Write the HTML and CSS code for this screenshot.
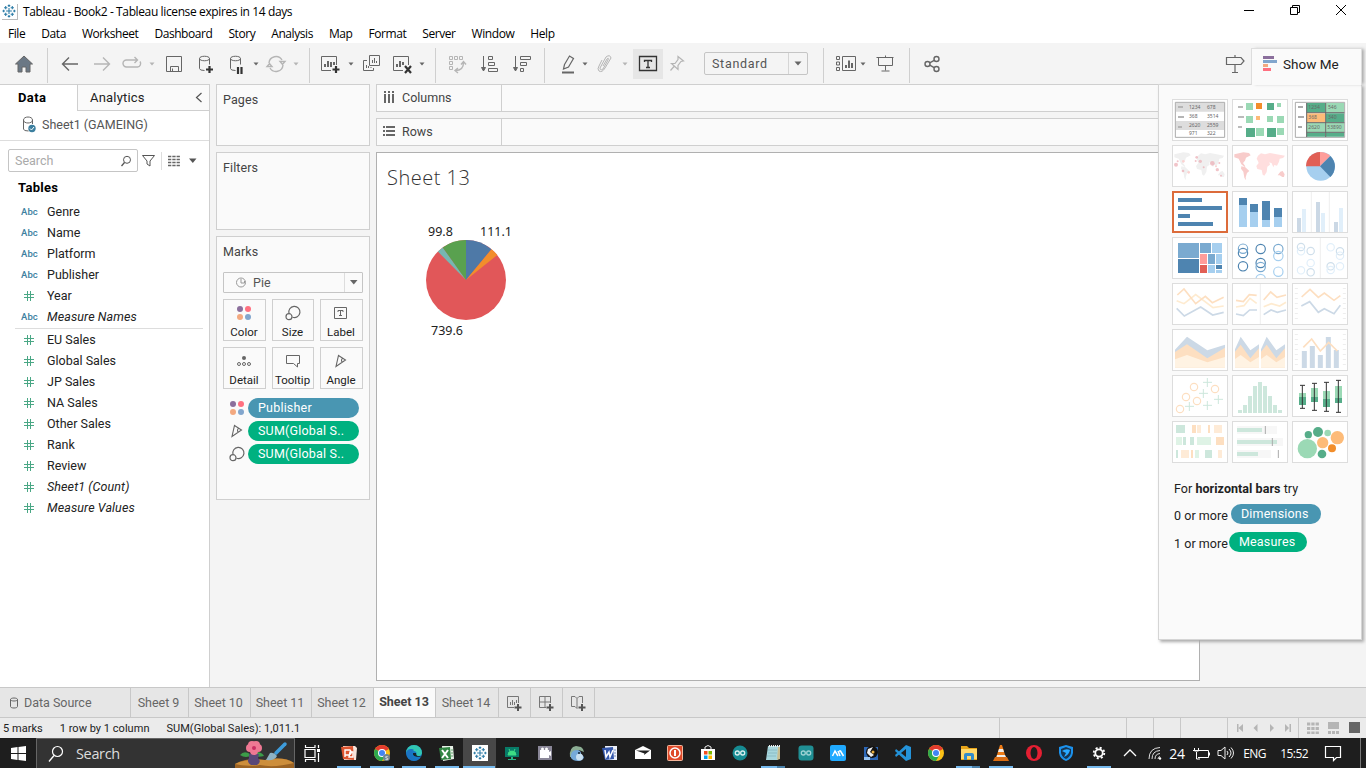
FILE: index.html
```html
<!DOCTYPE html>
<html lang="en">
<head>
<meta charset="utf-8">
<title>Tableau - Book2</title>
<link rel="stylesheet" href="styles.css">
</head>
<body>
<svg class="defs" width="0" height="0">
  <defs>
    <symbol id="caret" viewBox="0 0 8 24"><path d="M1.500 10.500h5L4 13.500z" fill="currentColor"/></symbol>
    <symbol id="hash" viewBox="0 0 12 12"><path d="M4.500 1v10M7.500 1v10M1 4.500h10M1 7.500h10" stroke="#4aa785" fill="none"/></symbol>
    <symbol id="dots" viewBox="0 0 16 16"><circle cx="4" cy="4" r="3" fill="#8b6f9c"/><circle cx="12" cy="4" r="3" fill="#ff7080"/><circle cx="4" cy="12" r="3" fill="#f3a980"/><circle cx="12" cy="12" r="3" fill="#82a6cd"/></symbol>
    <symbol id="size" viewBox="0 0 16 16"><g fill="none" stroke="#666" stroke-width="1.2"><path d="M4 8.500A5.600 5.600 0 1 1 7.500 12.200"/><circle cx="4" cy="11.700" r="3"/></g></symbol>
    <symbol id="angle" viewBox="0 0 16 16"><path d="M5.500 2.500L12.500 7 3 13.500zM9.500 5Q7.500 8 9.500 9.200" fill="none" stroke="#666" stroke-width="1.1"/></symbol>
    <symbol id="logo" viewBox="0 0 17 17"><path d="M8.500 5v7M5 8.500h7M8.500 .5v3M7 2h3M8.500 13.500v3M7 15h3M2 7v3M.5 8.500h3M15 7v3M13.500 8.500h3M4.500 2.500v4M2.500 4.500h4M12.500 2.500v4M10.500 4.500h4M4.500 10.500v4M2.500 12.500h4M12.500 10.500v4M10.500 12.500h4" fill="none" stroke="#2b7ba6" stroke-width="1.300"/></symbol>
    <symbol id="chrome" viewBox="0 0 16 16"><circle cx="8" cy="8" r="8" fill="#fbc116"/><path d="M8 8L1.100 4A8 8 0 0 1 14.900 4z" fill="#e33b2e"/><path d="M8 8L1.100 4A8 8 0 0 0 8 16l4-7z" fill="#2da94f"/><circle cx="8" cy="8" r="4" fill="#fff"/><circle cx="8" cy="8" r="3" fill="#4285f4"/></symbol>
  </defs>
</svg>
<div class="app">
  <header class="titlebar">
    <span class="app-icon"><svg width="14" height="14"><use href="#logo"/></svg></span>
    <span class="app-title">Tableau - Book2 - Tableau license expires in 14 days</span>
    <div class="window-buttons">
      <svg width="12" height="12"><path d="M1 6.500h10" stroke="#000"/></svg>
      <svg width="12" height="12"><path d="M1.500 3.500h7v7h-7zM3.500 3.500v-2h7v7h-2" fill="none" stroke="#000"/></svg>
      <svg width="12" height="12"><path d="M1 1l10 10M11 1L1 11" stroke="#000"/></svg>
    </div>
  </header>
  <nav class="menubar">
    <span>File</span><span>Data</span><span>Worksheet</span><span>Dashboard</span><span>Story</span><span>Analysis</span><span>Map</span><span>Format</span><span>Server</span><span>Window</span><span>Help</span>
  </nav>
  <div class="toolbar">
    <svg class="ic" viewBox="0 0 24 24"><path d="M12 4l8.500 8H18v8h-4v-5h-4v5H6v-8H3.500z" fill="#6b7885"/></svg>
    <i class="sep"></i>
    <svg class="ic thick" viewBox="0 0 24 24"><path d="M20 12H5M11 5.500L4.500 12l6.500 6.500"/></svg>
    <svg class="ic thick off" viewBox="0 0 24 24"><path d="M4 12h15M13 5.500l6.500 6.500-6.500 6.500"/></svg>
    <svg class="ic thick off" viewBox="0 0 24 24"><path d="M17 8H6.500a3.500 3.500 0 0 0 0 7h11a3.500 3.500 0 0 0 2.500-5.500M14.500 5l3 3-3 3"/></svg>
    <svg class="caret off"><use href="#caret"/></svg>
    <svg class="ic" viewBox="0 0 24 24"><path d="M4.500 4.500h15v15h-15zM8.500 19.500v-5h8v5M10.500 19.500v-3"/></svg>
    <svg class="ic" viewBox="0 0 24 24"><path d="M5.500 6.500v10q0 2 5 2M5.500 6.500c0-3 10-3 10 0s-10 3-10 0M15.500 6.500v6"/><path class="bold" d="M15.500 14v7M12 17.500h7"/></svg>
    <svg class="ic" viewBox="0 0 24 24"><path d="M6.500 6.500v10q0 2 5 2M6.500 6.500c0-3 10-3 10 0s-10 3-10 0M16.500 6.500v6"/><path class="bold" d="M14 15v7M17.500 15v7"/></svg>
    <svg class="caret"><use href="#caret"/></svg>
    <svg class="ic off thick" viewBox="0 0 24 24"><path d="M5 11a7 7 0 0 1 13-3M19 13a7 7 0 0 1-13 3M16 9.500h5L18.500 12.500zM3 14.500h5L5.500 11.500z"/></svg>
    <svg class="caret off"><use href="#caret"/></svg>
    <i class="sep"></i>
    <svg class="ic" viewBox="0 0 24 24"><path d="M13 18.500H3.500v-14h15V13"/><path class="mid" d="M7 15v-3M10 15v-6M13 15v-5M16 13v-3"/><path class="bold" d="M18 14v7M14.500 17.500h7"/></svg>
    <svg class="caret"><use href="#caret"/></svg>
    <svg class="ic" viewBox="0 0 24 24"><path d="M10.500 3.500h10v10h-10zM8 8.500H4.500v10h10V16M7.500 16v-3M9.500 16v-2M12 16v-1M13.500 11V8M15.500 11V6M17.500 11V9"/></svg>
    <svg class="ic" viewBox="0 0 24 24"><path d="M13 18.500H3.500v-14h15V13"/><path class="mid" d="M7 15v-3M10 15v-6M13 13v-3"/><path class="bold" d="M15 14l6 7M21 14l-6 7"/></svg>
    <svg class="caret"><use href="#caret"/></svg>
    <i class="sep"></i>
    <svg class="ic off" viewBox="0 0 24 24"><path d="M4.500 4.500h3v3h-3zM9.500 4.500h3v3h-3zM14.500 4.500h3v3h-3zM4.500 9.500h3v3h-3zM4.500 14.500h3v3h-3z"/><path class="thick" d="M18.500 10.500q0 8-8 8M16 12.500l2.500-3 2.500 3M13 16l-3 2.500 3 2.500"/></svg>
    <svg class="ic" viewBox="0 0 24 24"><path d="M5.500 4v15"/><path d="M3.500 15.500h4L5.500 19z" fill="#666"/><path d="M10.500 4.500h4v3h-4zM10.500 10.500h6v3h-6zM10.500 16.500h9v3h-9z"/></svg>
    <svg class="ic" viewBox="0 0 24 24"><path d="M5.500 4v15"/><path d="M3.500 15.500h4L5.500 19z" fill="#666"/><path d="M10.500 4.500h10v3h-10zM10.500 10.500h6v3h-6zM10.500 16.500h3v3h-3z"/></svg>
    <i class="sep"></i>
    <svg class="ic" viewBox="0 0 24 24"><path d="M8.500 12.500L13.500 4l4 2.500-5 8.500-5 2z" stroke-width="1.200"/><path class="mid" d="M6 20.500h12"/></svg>
    <svg class="caret"><use href="#caret"/></svg>
    <svg class="ic off" viewBox="0 0 24 24"><path d="M10 14l4-7q2-2 1 1l-5 9q-3 2-3-1l6-11q4-3 5 1l-6 10q-3 5-6 3-2-2 0-5l3-6"/></svg>
    <svg class="caret off"><use href="#caret"/></svg>
    <span class="toggle-on"><svg class="ic" viewBox="0 0 24 24"><path d="M3.500 4.500h17v14h-17zM8.500 10V8.500h7V10M12 8.500v7M10 15.500h4" stroke-width="1.300"/></svg></span>
    <svg class="ic off" viewBox="0 0 24 24"><path d="M13 4.500l5.500 4.500-2.500.5-3 4v4l-6.500-6H10l3-4zM9 14.500L5.500 18.500" stroke-width="1.200"/></svg>
    <div class="fit-select"><span>Standard</span><b><svg width="8" height="5"><path d="M.5 .5h7L4 4.500z" fill="#666"/></svg></b></div>
    <i class="sep"></i>
    <svg class="ic" viewBox="0 0 24 24"><path d="M2.500 4.500h3v3h-3zM2.500 10h3v3h-3zM2.500 15.500h3v3h-3zM8.500 4.500h13v14h-13z"/><path class="mid" d="M12 16v-3M15 16V8.500M18 16v-5"/></svg>
    <svg class="caret"><use href="#caret"/></svg>
    <svg class="ic" viewBox="0 0 24 24"><path d="M3.500 5.500h17M5.500 5.500v8h14v-8M12.500 13.500v5M8.500 19h8M12.500 3.500v2"/></svg>
    <i class="sep"></i>
    <svg class="ic thick" viewBox="0 0 24 24"><circle cx="7.500" cy="12" r="2.500"/><circle cx="16.500" cy="7" r="2.500"/><circle cx="16.500" cy="17" r="2.500"/><path d="M9.700 10.800l4.500-2.500M9.700 13.200l4.500 2.500"/></svg>
    <svg class="ic" viewBox="0 0 24 24"><path d="M3.500 5.500H18l3 3.500-3 3.500H3.500zM12 3v2.500M12 12.500v8M9 20.500h6" stroke-width="1.200"/></svg>
  </div>

  <main class="workspace">
    <aside class="data-pane">
      <div class="pane-tabs"><b>Data</b><span>Analytics<svg width="8" height="12"><path d="M6.500 1L1.500 5.500l5 4.500" fill="none" stroke="#555" stroke-width="1.200"/></svg></span></div>
      <div class="datasource"><svg width="16" height="18"><path d="M1.500 4v9q0 2 5 2M1.500 4c0-4 9-4 9 0s-9 4-9 0M10.500 4v4" fill="none" stroke="#666"/><circle cx="10" cy="12.500" r="3.700" fill="#3c7f9f"/><path d="M8 12.500l1.500 1.500 2.500-3" stroke="#fff" fill="none"/></svg><span>Sheet1 (GAMEING)</span></div>
      <div class="search-row">
        <div class="search"><span>Search</span><svg width="12" height="12"><circle cx="7" cy="4.800" r="3.500" fill="none" stroke="#555"/><path d="M4.500 7.500L1.500 11" stroke="#555" stroke-width="1.300"/></svg></div>
        <svg width="15" height="14"><path d="M1.500 1.500h12L9 7v5l-3-2V7z" fill="none" stroke="#555"/></svg>
        <i></i>
        <svg width="13" height="12"><path d="M0 1.500h12M0 4.500h12M0 7.500h12M0 10.500h12" stroke="#666" stroke-width="1.300" stroke-dasharray="3.300 1"/></svg>
        <svg width="8" height="6"><path d="M0 .5h7.500L3.800 5z" fill="#555"/></svg>
      </div>
      <h2>Tables</h2>
      <ul class="fields">
        <li><em>Abc</em>Genre</li><li><em>Abc</em>Name</li><li><em>Abc</em>Platform</li><li><em>Abc</em>Publisher</li>
        <li><svg><use href="#hash"/></svg>Year</li><li class="it"><em>Abc</em>Measure Names</li>
      </ul>
      <ul class="fields measures">
        <li><svg><use href="#hash"/></svg>EU Sales</li><li><svg><use href="#hash"/></svg>Global Sales</li><li><svg><use href="#hash"/></svg>JP Sales</li><li><svg><use href="#hash"/></svg>NA Sales</li><li><svg><use href="#hash"/></svg>Other Sales</li><li><svg><use href="#hash"/></svg>Rank</li><li><svg><use href="#hash"/></svg>Review</li><li class="it"><svg><use href="#hash"/></svg>Sheet1 (Count)</li><li class="it"><svg><use href="#hash"/></svg>Measure Values</li>
      </ul>
    </aside>

    <section class="cards">
      <div class="card pages">Pages</div>
      <div class="card filters">Filters</div>
      <div class="card marks">
        <div>Marks</div>
        <div class="mark-type"><svg width="12" height="12"><circle cx="6" cy="5.500" r="4.500" fill="none" stroke="#999"/><path d="M6 2v4h3.500V4" fill="none" stroke="#999"/></svg><span>Pie</span><b><svg width="8" height="5"><path d="M0 0h7.500L3.800 4.500z" fill="#666"/></svg></b></div>
        <div class="mark-buttons">
          <div><svg width="16" height="16"><use href="#dots"/></svg>Color</div>
          <div><svg width="16" height="16"><use href="#size"/></svg>Size</div>
          <div><svg width="16" height="16"><path d="M1.500 2.500h12v11h-12zM5 7V5.500h5V7M7.500 5.500v5M6 10.500h3" fill="none" stroke="#666"/></svg>Label</div>
          <div><svg width="16" height="16"><circle cx="8" cy="5" r="2" fill="#666"/><g fill="none" stroke="#666"><circle cx="3" cy="11" r="1.500"/><circle cx="8" cy="11" r="1.500"/><circle cx="13" cy="11" r="1.500"/></g></svg>Detail</div>
          <div><svg width="16" height="16"><path d="M1.500 2.500h13v8h-2v3.500L8.500 10.500h-7z" fill="none" stroke="#666"/></svg>Tooltip</div>
          <div><svg width="16" height="16"><use href="#angle"/></svg>Angle</div>
        </div>
        <div class="pill-row"><svg width="16" height="16"><use href="#dots"/></svg><span class="pill dim">Publisher</span></div>
        <div class="pill-row"><svg width="16" height="16"><use href="#angle"/></svg><span class="pill">SUM(Global S..</span></div>
        <div class="pill-row"><svg width="16" height="16"><use href="#size"/></svg><span class="pill">SUM(Global S..</span></div>
      </div>
    </section>

    <section class="view">
      <div class="shelf"><span><svg width="12" height="12"><path d="M2 0v2M6 0v2M10 0v2M2 3v9M6 3v9M10 3v9" stroke="#666" stroke-width="2"/></svg>Columns</span></div>
      <div class="shelf"><span><svg width="12" height="12"><path d="M0 2h2M3 2h9M0 6h2M3 6h9M0 10h2M3 10h9" stroke="#666" stroke-width="2"/></svg>Rows</span></div>
      <div class="sheet">
        <h1>Sheet 13</h1>
        <div class="pie-chart">
          <div class="pie-top"><span>99.8</span><span>111.1</span></div>
          <svg width="80" height="80" viewBox="0 0 80 80"><circle cx="40" cy="40" r="40" fill="#e15759"/><path d="M40 40V0A40 40 0 0 1 65.500 9.200z" fill="#4e79a7"/><path d="M40 40L65.500 9.200A40 40 0 0 1 71.300 15.100z" fill="#f28e2b"/><path d="M40 40L11.900 11.600A40 40 0 0 1 16.800 7.400z" fill="#76b7b2"/><path d="M40 40L16.800 7.400A40 40 0 0 1 40 0z" fill="#59a14f"/></svg>
          <div class="pie-bottom">739.6</div>
        </div>
      </div>
    </section>
  </main>

  <footer class="sheet-tabs">
    <span class="source"><svg width="10" height="12"><path d="M1.500 2.500v7c0 2 7 2 7 0v-7c0-2-7-2-7 0s7 2 7 0" fill="none" stroke="#666"/></svg>Data Source</span>
    <span>Sheet 9</span><span>Sheet 10</span><span>Sheet 11</span><span>Sheet 12</span><span class="active">Sheet 13</span><span>Sheet 14</span>
    <span><svg width="18" height="18"><path d="M9 13.500H2.500v-11h11V9M5.500 11V8M7.500 11V6M9.500 11V8M11.500 9V6" fill="none" stroke="#777"/><path d="M13 10v7M9.500 13.500h7" stroke="#555" stroke-width="2"/></svg></span>
    <span><svg width="18" height="18"><path d="M9 13.500H2.500v-11h11V9M8 2.500v11M2.500 8h11" fill="none" stroke="#777"/><path d="M13 10v7M9.500 13.500h7" stroke="#555" stroke-width="2"/></svg></span>
    <span><svg width="18" height="18"><path d="M8 14.500l-2-2H2.500v-10H6l2 2 2-2h3.500V9M8 4.500v10" fill="none" stroke="#777"/><path d="M13 10v7M9.500 13.500h7" stroke="#555" stroke-width="2"/></svg></span>
  </footer>
  <div class="status">
    <span class="st">5 marks</span><span class="st">1 row by 1 column</span><span class="st">SUM(Global Sales): 1,011.1</span>
    <div class="status-cells"><i></i><i></i><i></i><i></i>
      <i><svg width="56" height="10"><g fill="#b5b5b5"><path d="M1 1h1.500v8H1zM7 1v8L2.500 5zM21.500 1v8L17.500 5zM34 1v8l4-4zM49 1v8l4-4zM53.500 1H55v8h-1.500z"/></g></svg></i>
      <i><svg width="54" height="12"><path d="M0 2h12M0 6.500h12M0 11h12" stroke="#b5b5b5" stroke-width="3" stroke-dasharray="3.300 1"/><path d="M21 0h11v7H21zM21 9h3v3h-3zM25 9h3v3h-3zM29 9h3v3h-3z" fill="#b5b5b5"/><path d="M42 0h11v11H42z" fill="#666"/></svg></i>
    </div>
  </div>

  <div class="taskbar">
    <div class="start"><svg width="15" height="15"><path d="M0 2l6.500-.9V7H0zM7.500 1L15 0v7H7.500zM0 8h6.500v6L0 13zM7.500 8H15v7l-7.500-1z" fill="#fff"/></svg></div>
    <div class="win-search"><svg width="16" height="18"><circle cx="9.500" cy="6.500" r="5" fill="none" stroke="#fff" stroke-width="1.200"/><path d="M6 10.500L1 16.500" stroke="#fff" stroke-width="1.300"/></svg><span>Search</span>
      <svg class="flower" width="60" height="28" viewBox="0 0 60 28"><path d="M1 28v-4q12-7 30-4 20-4 29 3v5z" fill="#9b6324"/><path d="M1 24q12-6 30-4 18-4 29 3-20 5-34 2-14 2-25-1z" fill="#cd8e3b"/><path d="M6 15q4-5 10-1l8-2q5 1 6 4-7 2-12-1-6 4-12 0z" fill="#3c9c49"/><path d="M15 14h10l-1 4q4 4-1 7h-6q-5-3-2-7z" fill="#5a4777"/><g fill="#ef7893"><circle cx="16" cy="8" r="4"/><circle cx="24" cy="8" r="4"/><circle cx="18" cy="5" r="4"/><circle cx="22" cy="5" r="4"/><circle cx="20" cy="11" r="4"/></g><circle cx="20" cy="8" r="2" fill="#c92e62"/><path d="M42 13L51 4" stroke="#3e9cdb" stroke-width="3.500" stroke-linecap="round"/><path d="M32 20l4-7q4-1 7 3-2 5-11 4z" fill="#8eb2c4"/></svg>
    </div>
    <div class="task-view"><svg width="17" height="17"><path d="M1 4.500h10v8H1zM1.500 0v2.500h9.500V0M1.500 17v-2.500h9.500V17M14.500 0v3M14.500 8v9" fill="none" stroke="#fff" stroke-width="1.200"/><path d="M13 4h3v3h-3z" fill="#fff"/></svg></div>
    <div class="apps">
      <div class="run"><svg viewBox="0 0 16 16"><path d="M2 1h12l2 2-1 12H3z" fill="#f6e4dc"/><path d="M0 2l12-1 1 14-11-1z" fill="#dd5530"/><path d="M4 12V5h5q3 3-1 5H4M9 7h3v5H8z" fill="none" stroke="#fff" stroke-width="1.400"/></svg></div>
      <div class="run"><svg viewBox="0 0 16 16"><use href="#chrome"/><circle cx="12.500" cy="12.500" r="3.500" fill="#6e8490"/><text x="11" y="15" class="badge">S</text></svg></div>
      <div class="run"><svg viewBox="0 0 16 16"><circle cx="8" cy="8" r="8" fill="#1679c5"/><path d="M0 8A8 8 0 0 1 16 8q-1 4-6 3 2-5-3-5-5 0-7 2z" fill="#32c7b3"/><path d="M0 8a5 5 0 0 1 8-3q-5 4-1 8 3 2 7 0Q8 19 2 13z" fill="#1b74c3"/><path d="M7 8q-1 4 7 4l1-1q-5 1-5-3z" fill="#18242b"/></svg></div>
      <div class="run"><svg viewBox="0 0 16 16"><path d="M3 1h11l1 13-11 2z" fill="#e8f2e8"/><path d="M0 3l11-1 1 12-10 1z" fill="#318643"/><path d="M3 5l6 8M9 5l-6 8" stroke="#fff" stroke-width="2"/><path d="M12 5h2M12 8h2M12 11h2" stroke="#61a36a"/></svg></div>
      <div class="run current"><svg viewBox="0 0 16 16"><path d="M0 0h16v16H0z" fill="#fff"/><use href="#logo" x="1" y="1" width="14" height="14"/></svg></div>
      <div><svg viewBox="0 0 16 16"><path d="M1 2h14v10H1z" fill="#087b68"/><path d="M4 10q0-4 4-4 4 0 4 4zM5 4l1 2M11 4l-1 2" fill="#3ddc84" stroke="#3ddc84"/><path d="M7 12h2v2h3v1H4v-1h3z" fill="#29b585"/></svg></div>
      <div><svg viewBox="0 0 16 16"><path d="M1 1h14v14H1z" fill="#8a8798"/><path d="M3 5h9v8H3zM12 7l2-1v5l-2-1z" fill="#fff"/><circle cx="5.500" cy="4" r="1.500" fill="#fff"/><circle cx="9.500" cy="4" r="1.500" fill="#fff"/></svg></div>
      <div><svg viewBox="0 0 16 16"><path d="M1 12Q0 2 7 1l5 1q3 2 3 5l-5-2q-6 0-7 7z" fill="#8cae94"/><path d="M2 13q-1-8 6-8 4 0 4 4l3 3q-1 4-6 4-5 0-7-3z" fill="#75a9d9"/><circle cx="10.500" cy="12" r="3.500" fill="#c9e0f2"/><circle cx="10" cy="8" r="1" fill="#123"/></svg></div>
      <div><svg viewBox="0 0 16 16"><path d="M3 1h12v14H4z" fill="#eef2fb"/><path d="M0 3l11-1 1 12-9 1z" fill="#3558ad"/><path d="M3 5l1 7 3-5 1 5 3-7" fill="none" stroke="#fff" stroke-width="1.500"/><path d="M12 5h2M12 8h2M12 11h2" stroke="#7d91be"/></svg></div>
      <div><svg viewBox="0 0 16 16"><path d="M0 5l8-4 8 4v9H0z" fill="#fff"/><path d="M1 5.500h14l-6 4.500.5-1.500z" fill="#222"/></svg></div>
      <div><svg viewBox="0 0 16 16"><rect width="16" height="16" rx="2" fill="#f5b59a"/><path d="M1 1h14v14H1z" fill="#df4929"/><circle cx="8" cy="8" r="5" fill="none" stroke="#fff" stroke-width="1.500"/><path d="M8 5v6" stroke="#fff" stroke-width="2"/></svg></div>
      <div><svg viewBox="0 0 16 16"><path d="M1 4h14v11H1z" fill="#fff"/><path d="M5 4V2q3-3 6 0v2" fill="none" stroke="#eee"/><path d="M4 6h3.500v3.500H4z" fill="#f25022"/><path d="M8.500 6H12v3.500H8.500z" fill="#7fba00"/><path d="M4 10.500h3.500V14H4z" fill="#00a4ef"/><path d="M8.500 10.500H12V14H8.500z" fill="#ffb900"/></svg></div>
      <div><svg viewBox="0 0 16 16"><circle cx="8" cy="8" r="7.500" fill="#168b92"/><g fill="none" stroke="#d8efef" stroke-width="1.300"><circle cx="5.300" cy="8" r="2"/><circle cx="10.700" cy="8" r="2"/></g></svg></div>
      <div class="run multi"><svg viewBox="0 0 16 16"><path d="M3 1h12l-2 14H1z" fill="#a7d6dc"/><path d="M13 2h2v12l-3 1z" fill="#c8bd91"/><path d="M3 5h9M3 8h9M2 11h9" stroke="#8bbcc5"/><path d="M4 1h11" stroke="#eee" stroke-width="2" stroke-dasharray="1 1"/></svg></div>
      <div><svg viewBox="0 0 16 16"><rect x=".5" y=".5" width="15" height="15" rx="3" fill="#208f94"/><g fill="none" stroke="#9ed2d4" stroke-width="1.300"><circle cx="5.300" cy="8" r="2"/><circle cx="10.700" cy="8" r="2"/></g></svg></div>
      <div><svg viewBox="0 0 16 16"><rect width="16" height="16" rx="2" fill="#20aaff"/><path d="M2.500 11l2.500-5 3 5M8 6l2 5M9 6h1.500l3 5" fill="none" stroke="#fff" stroke-width="1.500"/></svg></div>
      <div><svg viewBox="0 0 16 16"><path d="M1 2h14v13H1z" fill="#2d68b8"/><circle cx="9" cy="7" r="6" fill="#111"/><path d="M5 4l5-2-3 5 4 3-3 2-4-4z" fill="#eee"/><circle cx="10" cy="7" r="1.500" fill="#e9ae3e"/><path d="M1 12h6v3H1z" fill="#99c4f1"/></svg></div>
      <div><svg viewBox="0 0 16 16"><path d="M11 0l5 2v12l-5 2-11-10 1-2 10 8V4L1 12l-1-2z" fill="#2493d9"/></svg></div>
      <div><svg viewBox="0 0 16 16"><use href="#chrome"/></svg></div>
      <div class="run multi"><svg viewBox="0 0 16 16"><path d="M0 1h6l2 2h8v12H0z" fill="#e9a519"/><path d="M0 4h16v10H0z" fill="#ffd96b"/><path d="M3 15v-5q0-2 2-2h6q2 0 2 2v5h-3v-4H6v4z" fill="#328cca"/></svg></div>
      <div class="run"><svg viewBox="0 0 16 16"><path d="M7 0h2l4 13H3z" fill="#ed7b16"/><path d="M6 4h4l1 3H5zM4 10h8l1 2H3.500z" fill="#eee"/><path d="M2 12h12l2 4H0z" fill="#d96c13"/></svg></div>
      <div><svg viewBox="0 0 16 16"><ellipse cx="8" cy="8" rx="8" ry="8" fill="#e51f32"/><ellipse cx="8" cy="8" rx="3.500" ry="6" fill="#1e1e1e"/></svg></div>
      <div><svg viewBox="0 0 16 16"><path d="M8 0l7 2v6q-1 6-7 8-6-2-7-8V2z" fill="#1b91ec"/><path d="M8 2l5 2v4q-1 4-5 6-4-2-5-6V4z" fill="#173450"/><path d="M4 6q4-3 8-1-1 5-6 7l2-4z" fill="#29a9ff"/></svg></div>
      <div class="run"><svg viewBox="0 0 16 16"><circle cx="8" cy="8" r="3.700" fill="none" stroke="#fff" stroke-width="1.800"/><circle cx="8" cy="8" r="5.300" fill="none" stroke="#fff" stroke-width="1.800" stroke-dasharray="2.080 2.080"/></svg></div>
    </div>
    <div class="tray">
      <svg width="14" height="10"><path d="M1 8l6-6 6 6" fill="none" stroke="#fff" stroke-width="1.300"/></svg>
      <svg width="14" height="14"><g fill="none" stroke="#ddd"><path d="M1 13Q1 2 12 1.500M4 13Q4 5 12 4.500M7 13q0-5 5-5.500M10 13q0-2 2-2.500"/></g><circle cx="12" cy="12.500" r="1.200" fill="#fff"/></svg>
      <span class="temp">24</span>
      <svg width="17" height="13"><path d="M6 3.500h9.500v7H5M16.500 5.500v3M1.500 1v3h4V1M0 3.500h6M3.500 5v7H7" fill="none" stroke="#fff"/></svg>
      <svg width="17" height="14"><path d="M1 4.500h3L8 1v12L4 9.500H1zM10 5q2 2 0 4M12 3q4 4 0 8M14 1.500q5 5.500 0 11" fill="none" stroke="#eee"/></svg>
      <span class="lang">ENG</span><span class="clock">15:52</span>
      <svg width="18" height="17"><path d="M1.500 1.500h15v11h-4l-3 3v-3h-8z" fill="none" stroke="#fff" stroke-width="1.200"/></svg>
      <i></i>
    </div>
  </div>

  <div class="show-me-tab"><svg width="15" height="16"><path d="M0 0h11v3H0z" fill="#8b6f9c"/><path d="M0 4h14v3H0z" fill="#82a6cd"/><path d="M0 8h5v3H0z" fill="#f3a980"/><path d="M0 12h8v3H0z" fill="#ff7080"/></svg>Show Me</div>
  <div class="show-me">
    <div class="thumbs">
      <svg viewBox="54 300 162 120"><path d="M61 307h148v105H61z" fill="#fff" stroke="#aaa" stroke-width="3"/><path d="M63 309h144v26H63zM63 363h144v27H63z" fill="#ddd"/><path d="M69 321h15M69 351h18M69 381h12" stroke="#b5b5b5" stroke-width="6"/><g class="tiny"><text x="102" y="327">1234</text><text x="156" y="327">678</text><text x="102" y="355">368</text><text x="156" y="355">3514</text><text x="102" y="382">2620</text><text x="156" y="382">2559</text><text x="102" y="406">971</text><text x="156" y="406">322</text></g></svg>
      <svg viewBox="234 300 162 120"><path d="M249 321h15M249 351h18M249 381h12" stroke="#bbb" stroke-width="6"/><path d="M273 309h21v21h-21zM366 309h12v12h-12zM273 348h21v21h-21zM336 348h18v18h-18zM366 348h21v21h-21zM303 384h24v24h-24zM366 384h21v21h-21z" fill="#9bd9b5"/><path d="M336 309h21v21h-21zM273 384h27v27h-27zM336 384h27v27h-27z" fill="#56ad89"/><path d="M303 309h18v18h-18z" fill="#f28e2b"/><path d="M303 348h12v12h-12z" fill="#fdbb78"/></svg>
      <svg viewBox="414 300 162 120"><path d="M421 307h148v105H421z" fill="#fff" stroke="#aaa" stroke-width="3"/><path d="M455 309h56v28h-56zM513 340h54v27h-54zM455 398h56v12h-56zM513 398h54v12h-54z" fill="#56ad89"/><path d="M513 309h54v28h-54zM455 369h56v27h-56zM513 369h54v27h-54z" fill="#9bd9b5"/><path d="M455 340h56v27h-56z" fill="#fdbb78"/><path d="M455 309v102M512 309v102M455 338h113M455 368h113M455 397h113" stroke="#666" stroke-width="3"/><path d="M429 321h15M429 351h18M429 381h12" stroke="#aaa" stroke-width="6"/><g class="tiny"><text x="460" y="326">1234</text><text x="519" y="326">546</text><text x="460" y="357">368</text><text x="519" y="357">340</text><text x="460" y="386">2620</text><text x="517" y="387">53890</text></g></svg>

      <svg viewBox="54 438 162 120"><path d="M58 463l27-6 17 2 5 7-14 7-3 9-6 7 7 10-2 2-10-8-8-17-13-4zM79 499l12 3 12 11-7 6-4 13 1 9-5-8-3-18-7-9z" fill="#f0f0f0"/><path d="M125 476l4-9 9-7 12 3 15-4 20 4 22 4-4 7-10 2-2 9-6 12-8-2-3 7-5-12-7-3 2 7-8 6-2 16-7 11-5-3-3-14-13-3-3-9 7-9-2-5zM188 526l8-11 7-2 6 10-2 8-5 0-8-5z" fill="#f0f0f0"/><g fill="#ebabb2" fill-opacity=".7"><circle cx="63" cy="494" r="6"/><circle cx="172" cy="490" r="7"/><circle cx="125" cy="472" r="4"/><circle cx="136" cy="484" r="5"/><circle cx="187" cy="509" r="5"/><circle cx="198" cy="527" r="3"/><circle cx="146" cy="502" r="3"/><circle cx="84" cy="513" r="4"/><circle cx="193" cy="489" r="3"/><circle cx="68" cy="484" r="3"/><circle cx="122" cy="483" r="3"/></g><g fill="#fbd2d1"><circle cx="85" cy="484" r="4"/><circle cx="101" cy="517" r="4"/><circle cx="183" cy="499" r="3"/></g></svg>
      <svg viewBox="234 438 162 120"><path d="M238 463l27-6 17 2 5 7-14 7-3 9-6 7 7 10-2 2-10-8-8-17-13-4zM259 499l12 3 12 11-7 6-4 13 1 9-5-8-3-18-7-9zM368 526l8-11 7-2 6 10-2 8-5 0-8-5z" fill="#f8cccb"/><path d="M305 476l4-9 9-7 12 3 15-4 20 4 25 4-6 7-10 2-2 9-6 12-8-2-3 7-5-12-7-3 2 7-8 6-2 16-7 11-5-3-3-14-13-3-3-9 7-9-2-5z" fill="#ffdede"/></svg>
      <svg viewBox="414 438 162 120"><circle cx="497" cy="499" r="43" fill="#a6cfef"/><path d="M495 499v-43A43 43 0 0 0 453 499z" fill="#e15f55"/><path d="M495 499v-43a43 43 0 0 1 31 12z" fill="#ff9d9a"/><path d="M495 499l31-31a43 43 0 0 1 0 63z" fill="#4e84b0"/></svg>

      <svg class="chosen" viewBox="54 576 162 120"><path d="M69 600h72M69 624h132M69 648h36M69 672h105" stroke="#4e84b0" stroke-width="12"/></svg>
      <svg viewBox="234 576 162 120"><path d="M252 614h24v67h-24zM285 635h24v46h-24zM321 660h24v21h-24zM357 651h24v30h-24z" fill="#a6cfef"/><path d="M252 594h24v21h-24zM285 612h24v24h-24zM321 603h24v57h-24zM357 624h24v27h-24z" fill="#4e84b0"/></svg>
      <svg viewBox="414 576 162 120"><path d="M469 576v120M523 576v120" stroke="#eee" stroke-width="3"/><path d="M432 696v-42M489 696v-90M543 696v-30" stroke="#cbd8e5" stroke-width="12"/><path d="M447 696v-69M504 696v-57M558 696v-72" stroke="#e1effa" stroke-width="12"/></svg>

      <svg viewBox="54 18 162 120"><path d="M69 33h63v45H69zM135 33h33v30h-33zM159 66h21v30h-21z" fill="#7aaad0"/><path d="M69 81h63v42H69zM183 99h18v12h-18z" fill="#4e84b0"/><path d="M171 33h30v30h-30zM183 66h18v30h-18zM159 99h21v24h-21zM183 114h18v9h-18z" fill="#a6cfef"/><path d="M135 66h21v30h-21z" fill="#ff9d9a"/><path d="M135 99h21v24h-21z" fill="#e15f55"/></svg>
      <svg viewBox="234 18 162 120"><g class="rings" stroke="#4e84b0"><circle cx="264" cy="63" r="14"/><circle cx="264" cy="103" r="14"/><circle cx="317" cy="51" r="14"/><circle cx="317" cy="93" r="14"/></g><g class="rings" stroke="#7aaad0"><circle cx="264" cy="50" r="14"/><circle cx="317" cy="105" r="14"/><circle cx="370" cy="51" r="14"/></g><g class="rings" stroke="#a6cfef"><circle cx="370" cy="72" r="14"/><circle cx="370" cy="119" r="14"/><circle cx="317" cy="141" r="14"/></g></svg>
      <svg viewBox="414 18 162 120"><path d="M496 18v120" stroke="#eee" stroke-width="3"/><g class="rings" stroke="#cfdfeb"><circle cx="438" cy="45" r="11"/><circle cx="467" cy="57" r="11"/><circle cx="467" cy="121" r="11"/><circle cx="555" cy="58" r="11"/><circle cx="527" cy="103" r="11"/></g><g class="rings" stroke="#e1effa"><circle cx="438" cy="58" r="11"/><circle cx="467" cy="93" r="11"/><circle cx="438" cy="115" r="11"/><circle cx="527" cy="46" r="11"/><circle cx="555" cy="71" r="11"/><circle cx="555" cy="103" r="11"/><circle cx="527" cy="114" r="11"/></g></svg>

      <svg class="lines" viewBox="54 156 162 120"><path d="M65 206l22 9 35-27 52 39 32-5" stroke="#feebd0"/><path d="M67 189l20-18 35 44 29-22 21 19 34-16" stroke="#fddfc1"/><path d="M65 229l23 23 49-27 36 24 33-8" stroke="#ccd9e6"/></svg>
      <svg class="lines" viewBox="234 156 162 120"><path d="M316 156v120" stroke="#eee" stroke-width="3"/><path d="M243 225l24-4 18-22 20 15M326 224l23-9 25 7 19-11" stroke="#feebd0"/><path d="M243 205l22 4 18-21 22 2M326 204l21-24 19 16 27-7" stroke="#fddfc1"/><path d="M243 246l22 5 19-17h22M326 248l22-14 19 7 26-7" stroke="#ccd9e6"/></svg>
      <svg class="lines" viewBox="414 156 162 120"><path d="M424 168v96M568 168v96" stroke="#eee" stroke-width="9" stroke-dasharray="3 12"/><path d="M440 195l25-23 25 24 18-13 29 22 19-14" stroke="#fddfc1"/><path d="M439 222l25-13 26 32 18-11 29 15 19-25" stroke="#ccd9e6"/></svg>

      <svg viewBox="54 294 162 120"><path d="M60 353l36-39 61 41 53-17v69H60z" fill="#ccd9e6"/><path d="M60 360l36-23 61 42 53-32v60H60z" fill="#fddfc1"/><path d="M60 382l36-13 61 22 53-16v32H60z" fill="#fff3e3"/></svg>
      <svg viewBox="234 294 162 120"><path d="M240 352l17-38 29 41 26-18v70h-72zM318 352l17-38 29 41 26-18v70h-72z" fill="#ccd9e6"/><path d="M240 359l17-21 29 41 26-30v58h-72zM318 359l17-21 29 41 26-30v58h-72z" fill="#fddfc1"/><path d="M240 381l17-12 29 22 26-16v32h-72zM318 381l17-12 29 22 26-16v32h-72z" fill="#fff3e3"/></svg>
      <svg class="lines" viewBox="414 294 162 120"><path d="M424 306v96M568 306v96" stroke="#eee" stroke-width="9" stroke-dasharray="3 12"/><path d="M448 408v-51M472 408v-66M496 408v-39M520 408v-93M544 408v-54" stroke="#ccd9e6" stroke-width="15"/><path d="M445 346l25-25 26 36 25-26 26 26" stroke="#fddfc1"/></svg>

      <svg viewBox="54 432 162 120"><g class="rings" stroke="#fddfc1"><circle cx="117" cy="465" r="11"/><circle cx="180" cy="471" r="11"/><circle cx="93" cy="495" r="11"/><circle cx="126" cy="507" r="11"/><circle cx="75" cy="531" r="11"/></g><path d="M144 451h27M157 438v27M132 484h27M145 471v27M177 502h27M190 489v27M90 523h27M103 510v27M144 520h27M157 507v27" stroke="#cde7dc" stroke-width="3"/></svg>
      <svg viewBox="234 432 162 120"><path d="M255 543v-9M270 543v-24M285 543v-51M300 543v-81M315 543v-93M330 543v-81M345 543v-51M360 543v-24M375 543v-9" stroke="#cde7dc" stroke-width="12"/></svg>
      <svg viewBox="414 432 162 120"><path d="M432 483h21v12h-21zM468 468h21v27h-21zM504 477h21v24h-21zM540 462h21v36h-21z" fill="#9bd9b5"/><path d="M432 495h21v24h-21zM468 495h21v15h-21zM504 501h21v24h-21zM540 498h21v15h-21z" fill="#56ad89"/><path d="M442 460v69M435 460h15M435 529h15M478 454v81M471 454h15M471 535h15M514 451v87M507 451h15M507 538h15M550 445v96M543 445h15M543 541h15" stroke="#333" stroke-width="3"/></svg>

      <svg viewBox="54 570 162 120"><path d="M63 579h27v24H63zM84 615h9v24h-9zM105 615h12v24h-12zM63 654h6v24h-6zM150 654h21v24h-21z" fill="#cde7dc"/><path d="M63 615h18v24H63zM126 615h42v24h-42zM120 654h12v24h-12z" fill="#dff3e6"/><path d="M111 579h12v24h-12zM159 579h6v24h-6zM183 615h24v24h-24zM108 654h6v24h-6z" fill="#fddfc1"/><path d="M126 579h12v24h-12zM177 579h24v24h-24zM78 654h24v24H78zM189 654h12v24h-12z" fill="#feebd7"/></svg>
      <svg viewBox="234 570 162 120"><path d="M246 594h120M246 630h138M246 666h102" stroke="#f7f7f7" stroke-width="24"/><path d="M246 594h75M246 630h120M246 666h63" stroke="#cde7dc" stroke-width="12"/><path d="M331 582v24M352 618v24M370 654v24" stroke="#aaa" stroke-width="3"/></svg>
      <svg viewBox="414 570 162 120"><circle cx="457" cy="650" r="29" fill="#9bd9b5"/><circle cx="518" cy="603" r="10" fill="#9bd9b5"/><circle cx="460" cy="608" r="11" fill="#56ad89"/><circle cx="489" cy="600" r="15" fill="#56ad89"/><circle cx="501" cy="666" r="13" fill="#56ad89"/><circle cx="503" cy="632" r="17" fill="#fdbb78"/><circle cx="547" cy="617" r="20" fill="#fdbb78"/><circle cx="531" cy="649" r="12" fill="#f28e2b"/></svg>
    </div>
    <p class="hint">For <b>horizontal bars</b> try</p>
    <p class="need">0 or more <span class="pill dim">Dimensions</span></p>
    <p class="need second">1 or more <span class="pill">Measures</span></p>
  </div>
</div>
</body>
</html>
```
FILE: styles.css
```css
* { box-sizing: border-box; }
html, body { margin: 0; height: 768px; overflow: hidden; }
body { font-family: Roboto, "Liberation Sans", sans-serif; font-size: 12.5px; color: #333; background: #f4f4f4; }
svg { display: block; flex: none; }
.defs { position: absolute; }
i, em { font-style: normal; }
.app { width: 1366px; height: 768px; display: flex; flex-direction: column; position: relative; overflow: hidden; white-space: nowrap; }

.titlebar { height: 23px; background: #fff; display: flex; align-items: center; padding-left: 2px; font: 12px "Open Sans", sans-serif; color: #000; }
.app-icon { width: 16px; height: 16px; border: solid #bbb; border-width: 0 1px 1px 0; }
.app-title { margin-left: 5px; letter-spacing: -.38px; }
.window-buttons { display: flex; gap: 34px; margin: -3px 19px 0 auto; }
.menubar { height: 20px; background: #fff; display: flex; padding-left: 8px; gap: 16px; font: 12px/21px "Open Sans", sans-serif; letter-spacing: -.43px; color: #000; }

.toolbar { height: 41px; display: grid; align-items: center; padding-left: 12px; grid-template-columns: 35px 11px 32px 30px 28px 14px 32px 30px 28px 12px 28px 17px 9px 29px 12px 31px 28px 17px 10px 33px 32px 34px 12px 25px 12px 28px 12px 32px 39px 119px 11px 25px 14px 36px 11px 303px 24px; }
.ic { width: 24px; height: 24px; fill: none; stroke: #666; }
.thick { stroke-width: 1.4; }
.ic.off { stroke: #b5b5b5; }
.bold { stroke: #333; stroke-width: 2.2; }
.mid { stroke-width: 2; }
.caret { width: 8px; height: 24px; color: #666; }
.caret.off { color: #b5b5b5; }
.sep { width: 1px; height: 35px; background: #cfcfcf; margin-top: 3px; }
.toggle-on { width: 30px; height: 30px; background: #e6e6e6; display: grid; place-items: center; }
.toggle-on .ic { stroke: #333; }
.fit-select { width: 104px; height: 23px; border: 1px solid #c5c5c5; border-radius: 2px; display: flex; font-size: 12.5px; line-height: 21px; padding-left: 7px; letter-spacing: .7px; color: #555; }
.fit-select b { margin-left: auto; width: 19px; border-left: 1px solid #d5d5d5; display: grid; place-items: center; }

.workspace { height: 603px; display: flex; }
.data-pane { width: 210px; background: #fff; border-right: 1px solid #cfcfcf; border-top: 1px solid #cfcfcf; }
.pane-tabs { display: flex; height: 26px; font-size: 13px; line-height: 25px; color: #222; letter-spacing: .2px; }
.pane-tabs b { width: 77px; padding-left: 18px; color: #000; letter-spacing: .4px; }
.pane-tabs span { flex: 1; display: flex; align-items: center; justify-content: space-between; padding: 0 6px 0 12px; background: #fafafa; border: solid #cfcfcf; border-width: 0 0 1px 1px; }
.datasource { height: 30px; display: flex; align-items: center; padding: 0 0 2px 22px; gap: 4px; border-bottom: 1px solid #ddd; color: #555; }
.search-row { height: 23px; margin: 8px 0 0 8px; display: flex; align-items: center; }
.search { width: 130px; height: 23px; border: 1px solid #c5c5c5; border-radius: 2px; display: flex; align-items: center; justify-content: space-between; padding: 0 5px 0 6px; color: #aaa; margin-right: 3px; }
.search-row i { width: 1px; height: 18px; background: #ddd; margin: 0 6px 0 5px; }
.search-row svg:last-child { margin-left: 8px; }
h2 { font-size: 13px; line-height: 18px; margin: 7px 0 4px 18px; color: #000; letter-spacing: .3px; }
.fields { list-style: none; margin: 0; padding: 0; }
.fields li { height: 21px; line-height: 21px; display: flex; align-items: center; color: #222; }
.fields em { width: 26px; margin-left: 21px; color: #3c7f9f; font-size: 9.5px; font-weight: 500; letter-spacing: .1px; }
.fields svg { width: 12px; height: 12px; margin: 0 12px 0 23px; }
.fields .it { font-style: italic; letter-spacing: .1px; }
.measures { border-top: 1px solid #ddd; margin: 1px 6px 0 15px; }
.measures svg { margin-left: 8px; }

.cards { width: 154px; margin-left: 6px; display: flex; flex-direction: column; gap: 6px; }
.card { background: #fafafa; border: 1px solid #cfcfcf; padding: 6px 6px; line-height: 17px; color: #444; letter-spacing: .1px; }
.pages { height: 62px; }
.filters { height: 78px; }
.marks { height: 264px; }
.mark-type { display: flex; align-items: center; height: 21px; margin-top: 12px; border: 1px solid #c5c5c5; border-radius: 1px; padding-left: 11px; color: #555; letter-spacing: 0; }
.mark-type span { margin-left: 6px; }
.mark-type b { margin-left: auto; width: 18px; height: 19px; border-left: 1px solid #ddd; display: grid; place-items: center; }
.mark-buttons { display: grid; grid-template-columns: 43px 42px 43px; gap: 6px; margin: 6px 0 9px; letter-spacing: 0; }
.mark-buttons div { height: 42px; border: 1px solid #cfcfcf; display: flex; flex-direction: column; align-items: center; gap: 3px; padding: 5px 1px 0 0; font-size: 11.5px; color: #222; }
.pill-row { display: flex; align-items: center; height: 20px; margin-bottom: 3px; padding-left: 6px; gap: 3px; }
.pill { background: #00b180; color: #fff; border-radius: 10px; height: 20px; line-height: 20px; padding: 0 11px 0 10px; letter-spacing: .2px; }
.pill.dim { background: #4996b2; }
.pill-row .pill { width: 111px; }

.view { width: 824px; margin-left: 6px; display: flex; flex-direction: column; gap: 6px; }
.shelf { height: 28px; border: 1px solid #cfcfcf; background: #fafafa; }
.shelf span { width: 125px; height: 26px; border-right: 1px solid #cfcfcf; display: flex; align-items: center; gap: 7px; padding: 0 0 2px 6px; color: #444; letter-spacing: 0; }
.sheet { height: 529px; background: #fff; border: 1px solid #b0b0b0; padding: 11px 10px; }
h1 { font: 300 20px/28px "Open Sans", sans-serif; letter-spacing: .5px; margin: 0; color: #333; }
.pie-chart { width: 90px; margin: 31px 0 0 39px; font: 12.5px/17px "Noto Sans", sans-serif; color: #222; }
.pie-top { display: flex; justify-content: space-between; padding-left: 2px; width: 86px; }
.pie-bottom { padding: 2px 0 0 5px; }

.sheet-tabs { height: 31px; display: grid; grid-template-columns: 131px 58px 62px 61px 62px 62px 63px 32px 32px 32px; background: #e6e6e6; border: solid #c8c8c8; border-width: 1px 0; line-height: 29px; color: #666; }
.sheet-tabs span { border-right: 1px solid #c8c8c8; display: grid; align-items: center; justify-content: center; padding-right: 2px; letter-spacing: -.02px; }
.sheet-tabs .active { background: #fafafa; font-weight: 700; color: #444; padding: 0 1px 2px 0; line-height: 27px; }
.sheet-tabs .source { display: flex; gap: 5px; justify-content: flex-start; padding-left: 9px; }
.status { height: 20px; background: #ebebeb; display: flex; padding-left: 3px; font-size: 11px; line-height: 21px; color: #222; gap: 17px; letter-spacing: .03px; }
.status-cells { margin-left: auto; display: grid; grid-template-columns: 127px 27px 27px 47px 71px 68px; }
.status-cells i { border-left: 1px solid #c8c8c8; display: grid; place-items: center; }
.status-cells svg { margin-left: 2px; }

.taskbar { height: 30px; background: #1e1e1e; display: flex; color: #fff; font-family: "Open Sans", sans-serif; }
.start { width: 36px; display: grid; place-items: center; }
.win-search { width: 259px; border: 1px solid #666; border-bottom: 0; background: #333; display: flex; align-items: center; padding-left: 11px; gap: 12px; font-size: 14.5px; letter-spacing: -.35px; color: #ddd; }
.flower { margin-left: auto; }
.task-view { width: 38px; padding-right: 4px; display: grid; place-items: center; }
.apps { display: grid; grid-template-columns: repeat(24, 32.6px); }
.apps div { position: relative; display: grid; place-items: center; }
.apps svg { width: 16px; height: 16px; }
.badge { font: 6px "Open Sans", sans-serif; fill: #fff; }
.run::after { content: ""; position: absolute; bottom: 0; left: 4px; width: 24px; height: 2px; background: #76b9ed; }
.run.multi::after { background: linear-gradient(90deg, #76b9ed 65%, #4a81aa 65%); }
.apps .current { background: #484848; }
.run.current::after { left: 0; width: 32px; }
.tray { display: grid; grid-template-columns: 25px 21px 24px 24px 26px 37px 44px 36px 1px; margin-left: 8px; align-items: center; }
.temp { font-size: 14px; letter-spacing: -.3px; }
.lang, .clock { font-size: 12px; letter-spacing: -.55px; }
.tray i { height: 30px; background: #777; }

.show-me-tab { position: absolute; left: 1251px; top: 48px; width: 111px; height: 37px; background: #fafafa; border: 1px solid #ddd; border-bottom: 0; display: flex; align-items: center; gap: 5px; padding: 0 0 7px 11px; font-size: 13.5px; color: #222; z-index: 2; box-shadow: 3px 0 3px -1px #aaa; }
.show-me { position: absolute; left: 1158px; top: 84px; width: 204px; height: 556px; background: #fafafa; border: 1px solid #d5d5d5; padding: 14px 13px; box-shadow: 2px 2px 3px #aaa; color: #222; }
.thumbs { display: grid; grid-template-columns: repeat(3, 56px); gap: 4px; }
.thumbs svg { width: 56px; height: 42px; background: #fff; border: 1px solid #ddd; }
.thumbs .chosen { border: 0; outline: 2px solid #dc6b3a; outline-offset: -2px; padding: 1px; }
.tiny { font: 15px "Noto Sans", sans-serif; fill: #666; }
.rings { fill: none; stroke-width: 3.5; }
.lines { fill: none; stroke-width: 5; }
.hint { margin: 17px 0 0 2px; line-height: 17px; letter-spacing: .05px; }
.need { margin: 7px 0 0 2px; height: 20px; display: flex; gap: 3px; line-height: 23px; letter-spacing: .05px; }
.need .pill { padding-right: 12px; }
.need.second { margin-top: 8px; gap: 1px; }
```
